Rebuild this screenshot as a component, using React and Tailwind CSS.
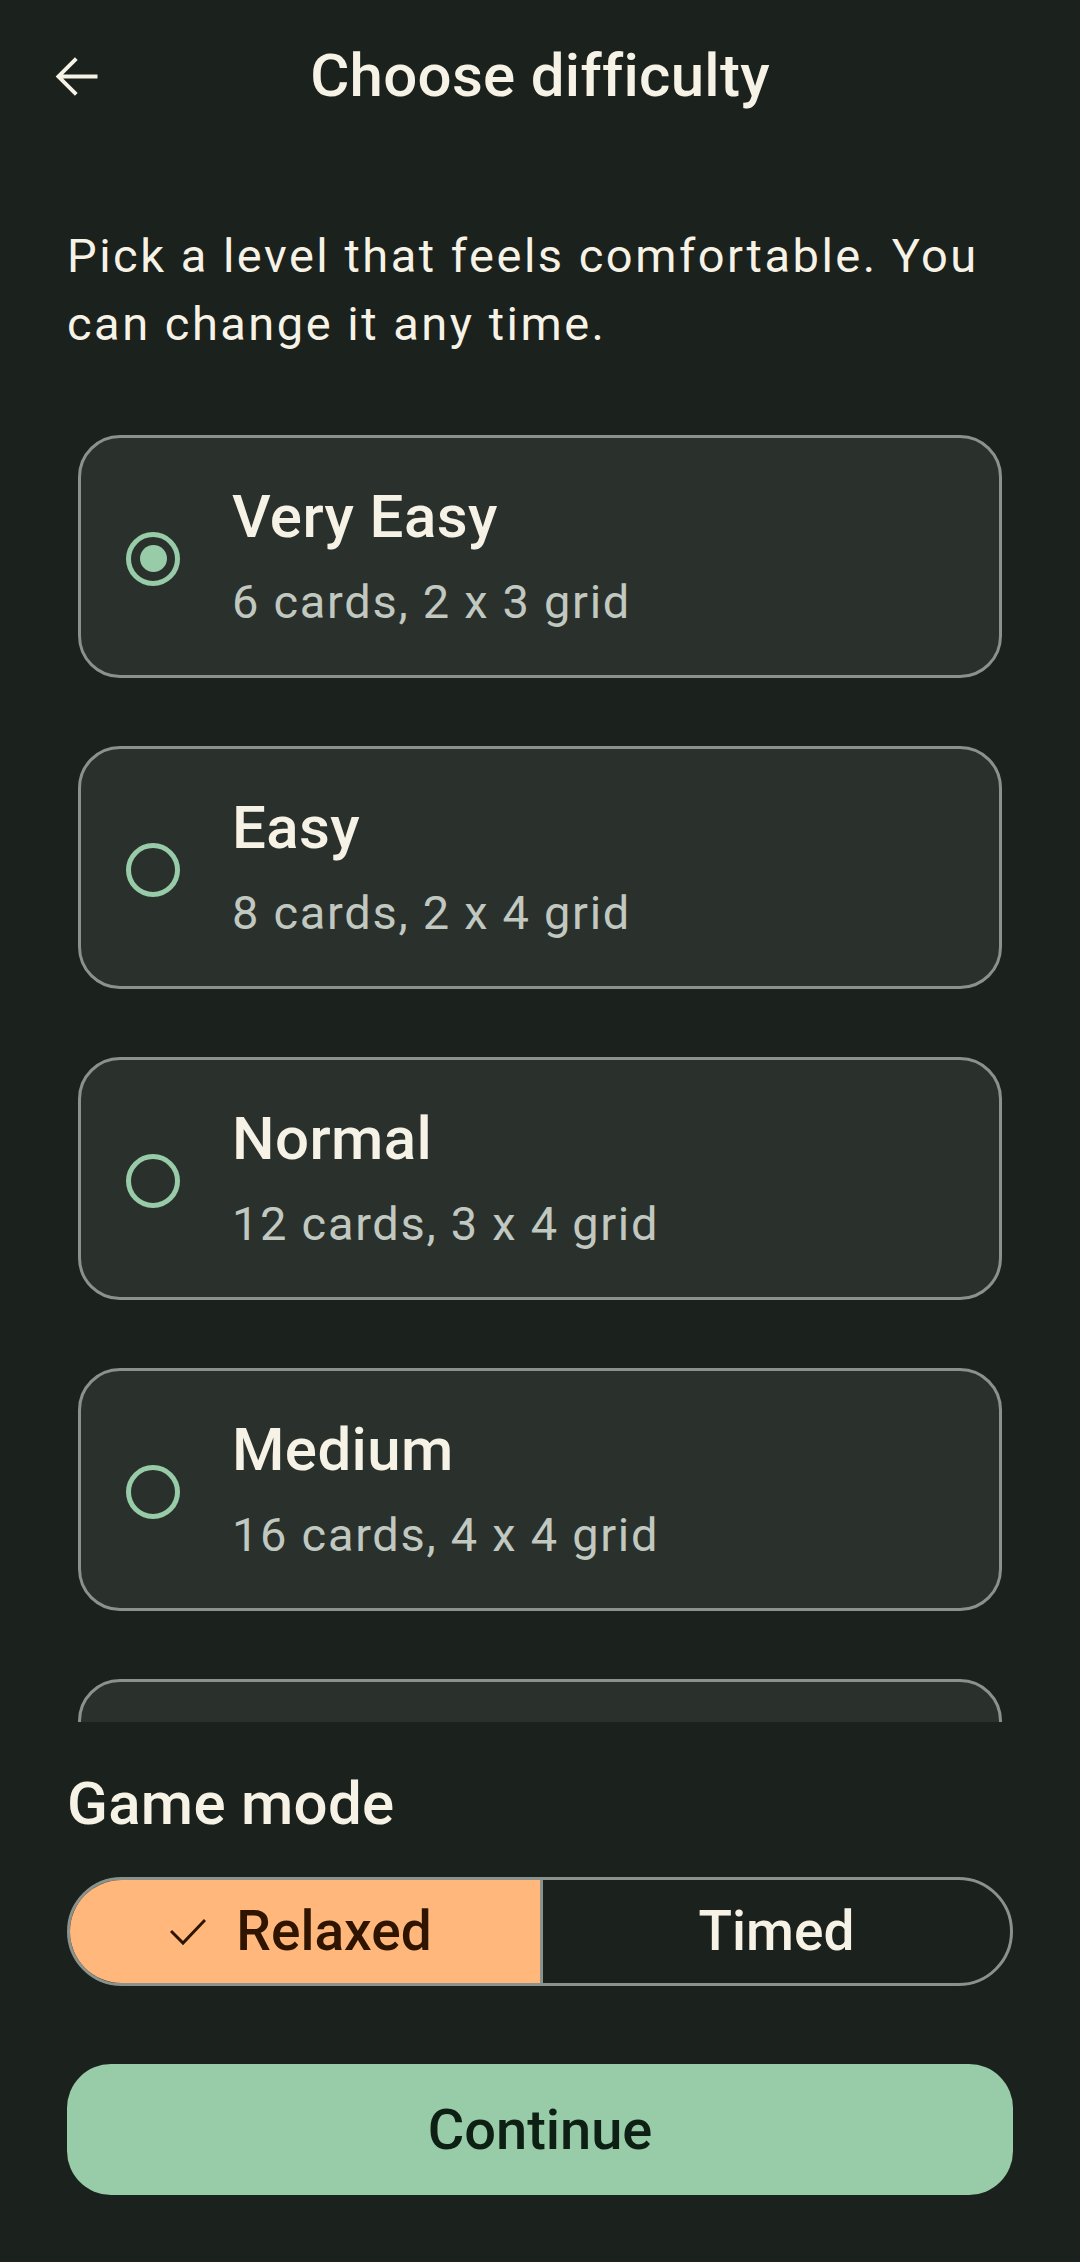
import React, { useState } from 'react';

const levels = [
    { id: 'very-easy', name: 'Very Easy', detail: '6 cards, 2 x 3 grid' },
    { id: 'easy', name: 'Easy', detail: '8 cards, 2 x 4 grid' },
    { id: 'normal', name: 'Normal', detail: '12 cards, 3 x 4 grid' },
    { id: 'medium', name: 'Medium', detail: '16 cards, 4 x 4 grid' },
    { id: 'hard', name: 'Hard', detail: '20 cards, 4 x 5 grid' },
];

const BackArrow = () => (
    <svg width="63" height="63" viewBox="0 0 24 24" fill="#f7f2e6">
        <path d="M20 11.25H6.9l5.55-5.55L11.4 4.65 4.05 12l7.35 7.35 1.05-1.05-5.55-5.55H20z" />
    </svg>
);

const Radio = ({ checked }) => (
    <div className="w-[54px] h-[54px] rounded-full border-[5px] border-[#98cba7] flex items-center justify-center shrink-0">
        {checked && <div className="w-[27px] h-[27px] rounded-full bg-[#98cba7]" />}
    </div>
);

const LevelCard = ({ level, selected, onSelect }) => (
    <button
        onClick={onSelect}
        className="h-[243px] shrink-0 w-full flex items-center pl-[45px] pt-[4px] rounded-[42px] border-[3px] border-[#8a928d] bg-[#2a312d] text-left"
    >
        <Radio checked={selected} />
        <div className="ml-[52px] flex flex-col">
            <span className="text-[60px] leading-[70px] font-medium tracking-[0.4px] text-[#f7f2e6]">{level.name}</span>
            <span className="mt-[16px] text-[47px] leading-[68px] tracking-[1.7px] text-[#c1c8c0]">{level.detail}</span>
        </div>
    </button>
);

export default function App() {
    const [level, setLevel] = useState('very-easy');
    const [mode, setMode] = useState('relaxed');

    return (
        <div className="w-[1080px] h-[2262px] bg-[#1b211d] flex flex-col overflow-hidden font-['Roboto',sans-serif]">
            {/* Top bar */}
            <div className="h-[152px] shrink-0 grid grid-cols-[1fr_auto_1fr] items-center">
                <div className="pl-[45px] flex items-center">
                    <BackArrow />
                </div>
                <h1 className="text-[60px] leading-[70px] font-medium tracking-[0.3px] text-[#f7f2e6]">Choose difficulty</h1>
                <div />
            </div>

            <p className="mt-[70px] pl-[67px] pr-[40px] text-[47px] leading-[68px] tracking-[2.5px] text-[#f7f2e6] shrink-0">
                Pick a level that feels comfortable. You can change it any time.
            </p>

            <div className="flex-1 min-h-0 overflow-hidden pt-[77px] px-[78px]">
                <div className="flex flex-col gap-[68px]">
                    {levels.map((l) => (
                        <LevelCard key={l.id} level={l} selected={level === l.id} onSelect={() => setLevel(l.id)} />
                    ))}
                </div>
            </div>

            {/* Mode + continue */}
            <div className="h-[540px] shrink-0 px-[67px] pt-[47px] flex flex-col">
                <h2 className="text-[60px] leading-[70px] font-medium tracking-[0.3px] text-[#f7f2e6]">Game mode</h2>

                <div className="mt-[38px] h-[109px] rounded-full border-[3px] border-[#8a928d] overflow-hidden flex">
                    <button
                        onClick={() => setMode('relaxed')}
                        className={`w-1/2 shrink-0 flex items-center justify-center gap-[30px] pr-[8px] ${mode === 'relaxed' ? 'bg-[#ffb77c] text-[#2f1500]' : 'text-[#f7f2e6]'}`}
                    >
                        {mode === 'relaxed' && (
                            <svg width="36" height="28" viewBox="0 0 36 28" fill="none" stroke="#2f1500" strokeWidth="3">
                                <polyline points="1,13 13,25 35,2" />
                            </svg>
                        )}
                        <span className="text-[55px] leading-none font-medium">Relaxed</span>
                    </button>
                    <button
                        onClick={() => setMode('timed')}
                        className={`w-1/2 shrink-0 flex items-center justify-center gap-[30px] border-l-[3px] border-[#8a928d] ${mode === 'timed' ? 'bg-[#ffb77c] text-[#2f1500]' : 'text-[#f7f2e6]'}`}
                    >
                        <span className="text-[55px] leading-none font-medium">Timed</span>
                    </button>
                </div>

                <button className="mt-[78px] h-[131px] rounded-[44px] bg-[#98cba7] text-[#0e1f14] text-[56px] font-medium">
                    Continue
                </button>
            </div>
        </div>
    );
}
